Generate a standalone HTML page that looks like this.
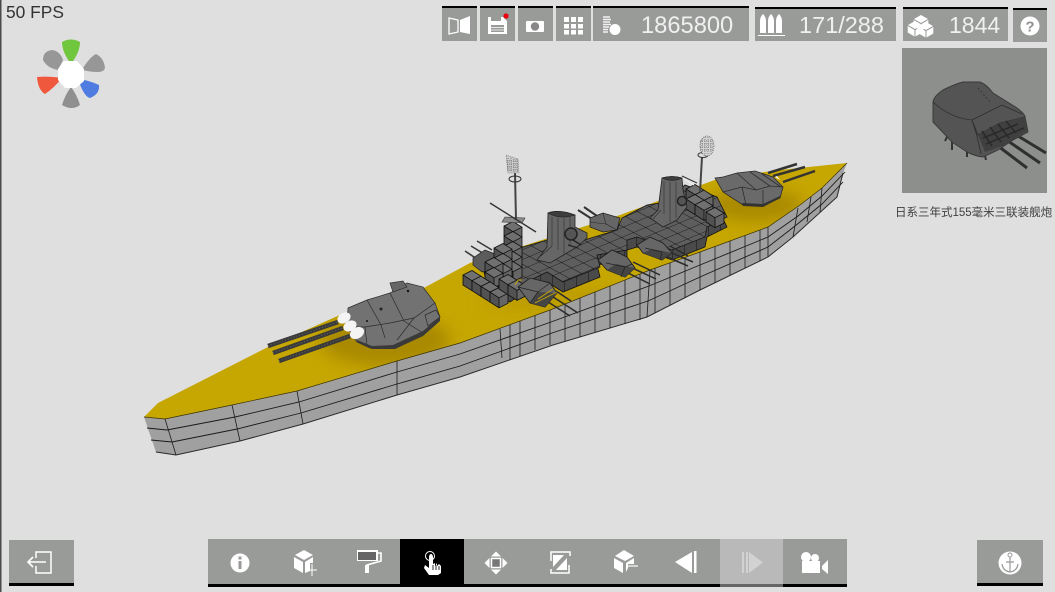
<!DOCTYPE html>
<html lang="zh">
<head>
<meta charset="utf-8">
<title>Ship Editor</title>
<style>
html,body{margin:0;padding:0;width:1055px;height:592px;overflow:hidden;background:#dfdfdf}
svg{display:block}
text{font-family:"Liberation Sans","Noto Sans CJK SC",sans-serif}
</style>
</head>
<body>
<svg width="1055" height="592" viewBox="0 0 1055 592" xmlns="http://www.w3.org/2000/svg">
<defs>
<pattern id="g" width="1" height="1" patternUnits="userSpaceOnUse" patternTransform="matrix(12 -5 10 5.5 3 2)">
<rect width="1" height="1" fill="#5e5e5e"/>
<path d="M0 0H1M0 0V1" stroke="#121212" stroke-width=".09" fill="none"/>
</pattern>
<pattern id="s" width="12" height="30" patternUnits="userSpaceOnUse">
<rect width="12" height="30" fill="#4a4a4a"/>
<path d="M0 0V30" stroke="#111" stroke-width="1"/>
</pattern>
<g id="c">
<path d="M0 0l9 5.700v10l-9 -5.700z" fill="#525252"/>
<path d="M9 5.700l9 -4.500v10l-9 4.500z" fill="#666"/>
<path d="M0 0l9 -4.500l9 5.700l-9 4.500z" fill="#707070"/>
<path d="M0 0l9 5.700l9 -4.500M9 5.700v10M0 0l9 -4.500l9 5.700v10l-9 4.500l-9 -5.700z" fill="none" stroke="#0e0e0e" stroke-width=".8"/>
</g>
<g id="k">
<path d="M0 0l7 4l-7 4l-7 -4z" fill="#fff"/>
<path d="M-7.300 5l6.800 4v6.500l-6.800 -4z" fill="#fff"/>
<path d="M.5 9l6.800 -4v6.500l-6.800 4z" fill="#fff"/>
</g>
<filter id="b"><feGaussianBlur stdDeviation="8"/></filter>
<filter id="b2"><feGaussianBlur stdDeviation=".35"/></filter>
<clipPath id="deckc"><path d="M144 417L158 403L268 347L340 315L420 290L470 263L620 215L720 178L780 170L847 163L822 188L800 205L768 227L700 252L650 270L550 310L460 343L397 361L297 391L232 405L165 419Z"/></clipPath>
</defs>

<rect width="1055" height="592" fill="#dfdfdf"/>
<rect x="0" y="0" width="1.500" height="592" fill="#4a4a4a"/>

<!-- FPS -->
<text x="6" y="18" font-size="17.400" fill="#333">50 FPS</text>

<!-- compass -->
<g filter="url(#b2)">
<path d="M62 42Q71 37 80 42Q80 52 71 64Q62 52 62 42Z" fill="#70c63c"/>
<path d="M43 60Q43 51 52 50Q60 51 63 60L58 70Q47 68 43 60Z" fill="#979797"/>
<path d="M83 68Q90 57 96 54Q104 58 105 68Q104 72 98 72Q90 72 83 70Z" fill="#979797"/>
<path d="M37 77Q50 76 62 78Q54 88 45 94Q38 90 37 77Z" fill="#f0583e"/>
<path d="M78 79Q88 80 99 85Q100 94 90 98Q84 97 78 79Z" fill="#4f7be0"/>
<path d="M71 87Q77 95 80 105Q72 111 62 105Q65 95 71 87Z" fill="#8f8f8f"/>
<path d="M64 61H77L84 69V81L76 88H65L58 80V69Z" fill="#fff"/>
</g>

<!-- Top bar -->
<g>
<g fill="#999b99">
<rect x="442" y="8" width="35" height="33"/><rect x="480" y="8" width="35" height="33"/>
<rect x="518" y="8" width="35" height="33"/><rect x="556" y="8" width="35" height="33"/>
<rect x="593" y="8" width="156" height="33"/><rect x="755" y="9" width="141" height="32"/>
<rect x="903" y="9" width="105" height="32"/><rect x="1013" y="10" width="34" height="32"/>
</g>
<g fill="#000">
<rect x="442" y="6" width="35" height="2"/><rect x="480" y="6" width="35" height="2"/>
<rect x="518" y="6" width="35" height="2"/><rect x="556" y="6" width="35" height="2"/>
<rect x="593" y="6" width="156" height="2"/><rect x="755" y="7" width="141" height="2"/>
<rect x="903" y="7" width="105" height="2"/><rect x="1013" y="8" width="34" height="2"/>
</g>
<!-- book -->
<path d="M449 18L458 20V32L449 34Z" fill="none" stroke="#fff" stroke-width="1.300"/>
<path d="M460 20L470 16V34L460 32Z" fill="#fff"/>
<!-- save -->
<path d="M488 17H503L507 21V34H488Z" fill="#fff"/>
<rect x="491" y="17" width="10" height="4" fill="#999b99"/>
<rect x="491" y="25" width="13" height="7" fill="#999b99"/>
<path d="M491 27.500H504M491 30H504" stroke="#fff" stroke-width=".8"/>
<circle cx="506" cy="16" r="2.600" fill="#e8000c"/>
<!-- camera -->
<rect x="526" y="21" width="18" height="11" rx="1" fill="#fff"/>
<circle cx="535" cy="26.500" r="4.200" fill="#888"/>
<!-- grid -->
<g fill="#fff">
<rect x="564" y="17" width="5" height="5"/><rect x="571" y="17" width="5" height="5"/><rect x="578" y="17" width="5" height="5"/>
<rect x="564" y="24" width="5" height="4.500"/><rect x="571" y="24" width="5" height="4.500"/><rect x="578" y="24" width="5" height="4.500"/>
<rect x="564" y="30" width="5" height="4.500"/><rect x="571" y="30" width="5" height="4.500"/><rect x="578" y="30" width="5" height="4.500"/>
</g>
<!-- coins -->
<path d="M603 17H610M603 19.500H611M603 22H610M603 24.500H611M603 27H609M603 29.500H608M603 32H608" stroke="#f2f2f2" stroke-width="1.400"/>
<circle cx="615" cy="29.500" r="5.500" fill="#fff"/>
<text x="641" y="33" font-size="23.700" fill="#f0f0f0">1865800</text>
<!-- shells -->
<g fill="#fff">
<path d="M760 33V21Q760 17 763 14Q766 17 766 21V33Z"/>
<path d="M768 33V21Q768 17 771 14Q774 17 774 21V33Z"/>
<path d="M776 33V21Q776 17 779 14Q782 17 782 21V33Z"/>
<rect x="758" y="35" width="27" height="1"/>
</g>
<text x="799" y="33" font-size="23.500" fill="#f0f0f0">171/288</text>
<!-- cubes -->
<use href="#k" x="921" y="15"/>
<use href="#k" x="915" y="21"/>
<use href="#k" x="926" y="22"/>
<text x="949" y="33" font-size="23" fill="#f0f0f0">1844</text>
<!-- help -->
<circle cx="1030" cy="26" r="9.500" fill="#fff"/>
<text x="1030" y="31.500" font-size="15" font-weight="bold" text-anchor="middle" fill="#8f8f8f">?</text>
</g>

<!-- Preview panel -->
<rect x="902" y="48" width="145" height="145" fill="#8d8f8d"/>
<g>
<path d="M1018 136L1046 153" stroke="#2f2f2f" stroke-width="3"/>
<path d="M1008 141L1040 163" stroke="#2f2f2f" stroke-width="3"/>
<path d="M998 146L1027 168" stroke="#2f2f2f" stroke-width="3"/>
<path d="M947 137L945 141M952 141L952 150M967 152L967 157M985 156L986 160" stroke="#333" stroke-width="2"/>
<path d="M933 102Q934 96 943 90Q955 84 963 82L980 82Q986 84 993 93L1017 108Q1025 114 1025 117L1028 132L1013 140L998 150L983 157Q975 156 967 152L952 142L933 122Z" fill="#545454" stroke="#3a3a3a" stroke-width="1"/>
<path d="M933 102Q950 118 972 120L1002 105M972 120L977 136L981 154M972 120L978 135L1000 123L1025 117M1002 105L1022 114" stroke="#2e2e2e" stroke-width=".8" fill="none"/>
<path d="M978 135L1000 123L1025 117L1027 131L1003 146L985 152Z" fill="#404040"/>
<path d="M982 131L992 146M990 127L1001 142M998 124L1009 138M1006 121L1016 133M983 138L1018 124M986 144L1024 128" stroke="#2a2a2a" stroke-width="1.600"/>
<path d="M978 88L990 102" stroke="#383838" stroke-width="1" stroke-dasharray="2 2"/>
</g>
<text x="895" y="216" font-size="11.500" fill="#3f3f3f">日系三年式155毫米三联装舰炮</text>

<!-- SHIP -->
<!-- hull -->
<path d="M144 417L165 419L232 405L297 391L397 361L460 343L550 310L650 270L700 252L768 227L800 205L822 188L847 163L843 173L837 197L793 237L768 257L700 290L647 317L553 345L460 377L397 395L303 424L240 441L176 455L156 452Z" fill="#a0a0a0"/>
<path d="M156 452L176 455L240 441L303 424L397 395L460 377L553 345L647 317L700 290L768 257L793 237L837 197L843 173" fill="none" stroke="#2a2a2a" stroke-width="1"/>
<path d="M147 428L167 430L235 417L299 402L397 372L460 354L551 322L649 286L700 265L768 237L798 216L822 196L845 172" fill="none" stroke="#1a1a1a" stroke-width=".9"/>
<path d="M151 440L172 442L237 429L301 413L397 384L460 366L552 333L648 301L700 277L768 247L795 226L822 204L843 182" fill="none" stroke="#1a1a1a" stroke-width=".9"/>
<path d="M165 419L176 455M232 405L240 441M297 391L303 424M397 361L397 395M500 329L502 358M510 325V360M520 321V356M535 315.500V350M550 310V345M565 304V341M580 298V337M595 292V332M610 286V328M625 280V324M640 274V320M650 270L647 317M655 268V313M670 263V305M685 257V298M700 252V290M715 246.500V283M730 241V275M745 235.500V268M760 230V261M768 227V257M798 208L793 237M822 188L820 212M811 197L807 222" fill="none" stroke="#1d1d1d" stroke-width=".8"/>

<!-- deck -->
<path d="M144 417L158 403L268 347L340 315L420 290L470 263L620 215L720 178L780 170L847 163L822 188L800 205L768 227L700 252L650 270L550 310L460 343L397 361L297 391L232 405L165 419Z" fill="#c6a600"/>
<g clip-path="url(#deckc)">
<g filter="url(#b)" fill="#a98900">
<ellipse cx="385" cy="340" rx="65" ry="26"/>
<ellipse cx="755" cy="205" rx="48" ry="16"/>
<ellipse cx="560" cy="300" rx="80" ry="10" opacity=".4"/>
</g>
</g>
<path d="M144 417L165 419L232 405L297 391L397 361L460 343L550 310L650 270L700 252L768 227L800 205L822 188L847 163" fill="none" stroke="#3a3200" stroke-width=".7"/>

<!-- turret 4 behind -->
<path d="M592 219L578 210M597 216L584 207" stroke="#333" stroke-width="2"/>
<path d="M590 218L603 213L620 218L617 230L603 232L590 227Z" fill="#666" stroke="#222" stroke-width=".8"/>
<path d="M603 213L606 224L617 230M590 222L606 224" fill="none" stroke="#2a2a2a" stroke-width=".6"/>

<!-- superstructure sides -->
<path transform="translate(0 10)" d="M487 275L484 262L505 252L523 247L547 240L578 242L617 230L622 218L647 205L660 203L685 185L717 197L727 217L707 227L705 237L672 250L637 237L627 240L627 250L597 255L600 267L563 282L547 272L517 287L510 292L487 280Z" fill="url(#s)" stroke="#111" stroke-width=".8"/>
<!-- top grid -->
<path d="M487 275L484 262L505 252L523 247L547 240L578 242L617 230L622 218L647 205L660 203L685 185L717 197L727 217L707 227L705 237L672 250L637 237L627 240L627 250L597 255L600 267L563 282L547 272L517 287L510 292L487 280Z" fill="url(#g)" stroke="#151515" stroke-width=".8"/>

<!-- rear stacked blocks -->
<use href="#c" x="686" y="189"/>
<use href="#c" x="695" y="194.700"/>
<use href="#c" x="686" y="199"/>
<use href="#c" x="695" y="204.700"/>
<use href="#c" x="706" y="212"/>

<!-- forward left guns -->
<path d="M465 251L480 261M471 246L486 255M477 241L492 250" stroke="#3a3a3a" stroke-width="1.600"/>
<path d="M473 258L485 250L495 254L492 270L482 272L473 265Z" fill="#5c5c5c" stroke="#222" stroke-width=".7"/>

<!-- Tower -->
<use href="#c" x="504" y="226"/>
<use href="#c" x="504" y="236"/>
<use href="#c" x="504" y="246"/>
<use href="#c" x="504" y="256"/>
<use href="#c" x="504" y="266"/>
<path d="M502 222L522 223L525 218L505 217Z" fill="#8a8a8a" stroke="#333" stroke-width=".6"/>
<use href="#c" x="494" y="248"/>
<use href="#c" x="494" y="258"/>
<use href="#c" x="494" y="268"/>
<use href="#c" x="485" y="262"/>
<use href="#c" x="485" y="272"/>
<!-- forward cube row -->
<use href="#c" x="463" y="275"/>
<use href="#c" x="472" y="280.700"/>
<use href="#c" x="481" y="286.400"/>
<use href="#c" x="490" y="292.100"/>
<use href="#c" x="499" y="279"/>
<use href="#c" x="508" y="284.700"/>

<!-- mast 1 -->
<path d="M515 173L516 220" stroke="#444" stroke-width="2"/>
<path d="M490 203L536 232" stroke="#333" stroke-width="1.400"/>
<ellipse cx="515" cy="179" rx="6" ry="3" fill="none" stroke="#333" stroke-width="1"/>
<path d="M506 155L518 159L519 173L508 173Z" fill="#c9c9c9" stroke="#666" stroke-width=".6" stroke-dasharray="1 1"/>
<path d="M508 158V172M511 158V172M514 159V172M517 159V172M507 161H518M507 164H518M507 167H518M507 170H518" stroke="#666" stroke-width=".7" stroke-dasharray="1 1"/>

<!-- funnel 1 -->
<path d="M548 213Q558 209 575 215L575 227L587 233L587 238L577 247L550 263L537 260L547 247Z" fill="#666" stroke="#222" stroke-width=".8"/>
<path d="M548 213Q560 220 575 215Q560 209 548 213Z" fill="#3d3d3d" stroke="#222" stroke-width=".6"/>
<path d="M552 217V246M558 218V250M564 218V254M570 217V245M541 256L552 246M538 258L548 250" stroke="#2f2f2f" stroke-width=".6"/>
<circle cx="571" cy="234" r="6" fill="#555" stroke="#222" stroke-width="1.500"/>
<path d="M573 240L581 245M568 245L578 248" stroke="#222" stroke-width="1.400"/>

<!-- funnel 2 -->
<path d="M662 178Q672 175 682 178L683 190L687 207L677 220L663 227L650 218L658 210Z" fill="#666" stroke="#222" stroke-width=".8"/>
<path d="M662 178Q672 183 682 178Q672 175 662 178Z" fill="#3d3d3d" stroke="#222" stroke-width=".6"/>
<path d="M664 181V214M670 182V222M676 182V218M653 219L661 210" stroke="#2f2f2f" stroke-width=".6"/>
<circle cx="682" cy="201" r="4.500" fill="#555" stroke="#222" stroke-width="1.400"/>
<path d="M683 178L694 185" stroke="#eee" stroke-width="1.200"/>
<path d="M682 176L697 183" stroke="#333" stroke-width="1"/>

<!-- mast 2 -->
<path d="M702 157L700 192" stroke="#444" stroke-width="2"/>
<ellipse cx="703" cy="155" rx="5" ry="2.500" fill="none" stroke="#333"/>
<ellipse cx="707" cy="146" rx="7" ry="10" fill="#d4d4d4" stroke="#555" stroke-width=".7" stroke-dasharray="1 1"/>
<path d="M702 139V154M705 137V156M708 137V156M711 139V154M700 141H714M700 144H714M700 147H714M700 150H714" stroke="#666" stroke-width=".7" stroke-dasharray="1 1"/>

<!-- secondary turrets -->
<g stroke="#2b2b2b" stroke-width="1.500">
<path d="M545 300L570 316M550 295L578 313M556 291L571 301"/>
<path d="M622 270L650 284M628 266L656 279M633 262L660 275"/>
<path d="M660 254L688 266M665 250L693 262M670 246L688 256"/>
</g>
<path d="M518 287L530 278L550 283L557 293L545 307L530 303Z" fill="#666" stroke="#1c1c1c" stroke-width=".8"/>
<path d="M598 260L612 250L627 257L635 268L625 277L607 270Z" fill="#666" stroke="#1c1c1c" stroke-width=".8"/>
<path d="M637 245L650 237L663 243L672 253L662 260L643 253Z" fill="#666" stroke="#1c1c1c" stroke-width=".8"/>
<path d="M538 292L557 293L545 307L530 303Z M616 264L635 268L625 277L607 270Z M652 249L672 253L662 260L643 253Z" fill="#454545"/>
<path d="M518 287L538 292L530 303M538 292L550 283M606 263L625 267L621 277M625 267L632 264M645 248L662 252L660 260" fill="none" stroke="#222" stroke-width=".7"/>
<path d="M515 285L518 280H522M535 303L557 292M538 299L553 289" fill="none" stroke="#c8a800" stroke-width=".9"/>

<!-- front main turret -->
<g>
<path d="M268 346L338 322" stroke="#3a3a3a" stroke-width="4.500"/>
<path d="M273 353L343 328" stroke="#3a3a3a" stroke-width="4.500"/>
<path d="M279 361L350 336" stroke="#3a3a3a" stroke-width="4.500"/>
<path d="M268 346L338 322M273 353L343 328M279 361L350 336" stroke="#666" stroke-width="1" stroke-dasharray="1 2"/>
<path d="M348 308L367 300L390 293L407 283L423 287L435 303L440 317L423 333L393 347L370 348L357 342L347 327Z" fill="#727272" stroke="#2b2b2b" stroke-width=".7"/>
<path d="M367 300L381 325L385 338M390 293L404 321M414 318L397 340M365 327L367 345M347 327L365 327L390 323L414 318L435 303M404 321L423 333M425 315L436 310L440 317L428 326Z" fill="none" stroke="#2b2b2b" stroke-width=".7"/>
<path d="M393 345L423 331L440 317V321L423 336L395 349L372 349L357 342V340L372 346Z" fill="#3a3a3a"/>
<path d="M390 283L403 281L407 287L393 292Z" fill="#666" stroke="#333" stroke-width=".7"/>
<circle cx="367" cy="321" r="1" fill="#111"/><circle cx="408" cy="291" r="1.200" fill="#111"/><circle cx="381" cy="309" r="1.500" fill="#222"/>
<ellipse cx="344" cy="318" rx="7" ry="5" transform="rotate(-30 344 318)" fill="#f4f4f4"/>
<ellipse cx="350" cy="326" rx="7" ry="5" transform="rotate(-30 350 326)" fill="#f4f4f4"/>
<ellipse cx="357" cy="333" rx="7.500" ry="5.500" transform="rotate(-30 357 333)" fill="#f4f4f4"/>
</g>

<!-- rear main turret -->
<g>
<path d="M768 173L797 164" stroke="#333" stroke-width="2.500"/>
<path d="M773 176L805 167" stroke="#333" stroke-width="2.500"/>
<path d="M783 182L815 171" stroke="#333" stroke-width="2.500"/>
<path d="M715 178L723 177L737 173L755 171L773 177L783 187L780 198L763 206L743 205L723 192Z" fill="#6a6a6a" stroke="#2b2b2b" stroke-width=".8"/>
<path d="M737 173L756 190M750 172L770 186M762 174L781 187M723 192L742 187L756 190L770 186L783 187M742 187L746 205M763 190V205" fill="none" stroke="#2d2d2d" stroke-width=".8"/>
<path d="M742 203L763 204L780 196V198L763 207L743 206Z" fill="#333"/>
<path d="M775 177L780 180L777 176Z" fill="#fff"/>
</g>

<!-- Bottom bar -->
<rect x="208" y="539" width="639" height="45" fill="#999b99"/>
<rect x="208" y="584" width="512" height="3" fill="#000"/>
<rect x="783" y="584" width="64" height="3" fill="#000"/>
<rect x="400" y="539" width="64" height="45" fill="#000"/>
<rect x="720" y="539" width="63" height="48" fill="#b9b9b9"/>
<rect x="720" y="584" width="63" height="3" fill="#666"/>

<!-- info -->
<circle cx="240" cy="563" r="9.500" fill="#fff"/>
<rect x="238.500" y="561" width="3" height="8" fill="#999b99"/>
<rect x="238.500" y="556.500" width="3" height="3" fill="#999b99"/>
<!-- cube plus -->
<path d="M304 550L313 555L304 560L295 555Z" fill="#fff"/>
<path d="M294 557L303 562V573L294 568Z" fill="#fff"/>
<path d="M305 562L313 557V563H310V571L305 573Z" fill="#fff"/>
<path d="M306 570H317M312 564V576" stroke="#fff" stroke-width="1"/>
<!-- roller -->
<rect x="357" y="550" width="21" height="11" fill="#fff"/>
<rect x="358" y="552" width="18" height="8" fill="#666"/>
<path d="M378 553H381V561L367 565V572" fill="none" stroke="#fff" stroke-width="1.600"/>
<rect x="365" y="565" width="4" height="8" fill="#fff"/>
<!-- hand -->
<circle cx="430" cy="556" r="4.500" fill="none" stroke="#fff" stroke-width="1"/>
<path d="M429 558Q429 554 431 554Q433 554 433 558V564L435 563V566L437 563V566L439 564L441 566V573L438 575H429L424 568L425 565L429 568Z" fill="#fff"/>
<path d="M433 565V570M436 565V570M439 566V570" stroke="#000" stroke-width=".8"/>
<!-- move -->
<g fill="#fff">
<path d="M496 551.500L501 556.500H491Z"/><path d="M496 574.500L501 569.500H491Z"/>
<path d="M484.500 563L489.500 558V568Z"/><path d="M507.500 563L502.500 558V568Z"/>
</g>
<rect x="491.500" y="558.500" width="9" height="9" fill="#777" stroke="#fff" stroke-width="1.500"/>
<!-- resize -->
<path d="M551 561V552H570V556M569 565V573H551V569" fill="none" stroke="#fff" stroke-width="1.500"/>
<path d="M553 555H564L553 567Z" fill="#fff"/>
<path d="M567 570H556L567 558Z" fill="#fff"/>
<!-- cube minus -->
<path d="M624 550L634 556L625 561L615 556Z" fill="#fff"/>
<path d="M614 558L623 563V573L614 568Z" fill="#fff"/>
<path d="M626 563L634 558V564H628V568L626 572Z" fill="#fff"/>
<path d="M627 566H638" stroke="#fff" stroke-width="1.200"/>
<!-- prev -->
<path d="M675 562L692 552V573Z" fill="#fff"/>
<rect x="694" y="551" width="2.500" height="22" fill="#fff"/>
<!-- next (disabled) -->
<g fill="#d2d2d2">
<rect x="742" y="552" width="2" height="21"/>
<rect x="746" y="552" width="2" height="21"/>
<path d="M749 552L763 562.500L749 573Z"/>
</g>
<!-- movie camera -->
<g fill="#fff">
<circle cx="806" cy="557" r="5"/>
<circle cx="815" cy="558" r="4"/>
<rect x="802" y="561" width="18" height="12"/>
<path d="M822 566L828 560V574L822 569Z"/>
</g>

<!-- Exit -->
<rect x="9" y="540" width="65" height="43" fill="#999b99"/>
<rect x="9" y="583" width="65" height="3" fill="#000"/>
<path d="M36 558V552H51V573H36V566" fill="none" stroke="#fff" stroke-width="1.500"/>
<path d="M28 562H46M33 557L28 562L33 567" fill="none" stroke="#fff" stroke-width="1.600"/>

<!-- Anchor -->
<rect x="977" y="540" width="66" height="43" fill="#999b99"/>
<rect x="977" y="583" width="66" height="3" fill="#000"/>
<circle cx="1010" cy="563" r="11.500" fill="#fff"/>
<circle cx="1010" cy="555" r="2" fill="none" stroke="#999b99" stroke-width="1"/>
<path d="M1010 557V572M1006 562H1014M1002 564Q1003 571 1010 572Q1017 571 1018 564" fill="none" stroke="#999b99" stroke-width="1.200"/>
</svg>
</body>
</html>
